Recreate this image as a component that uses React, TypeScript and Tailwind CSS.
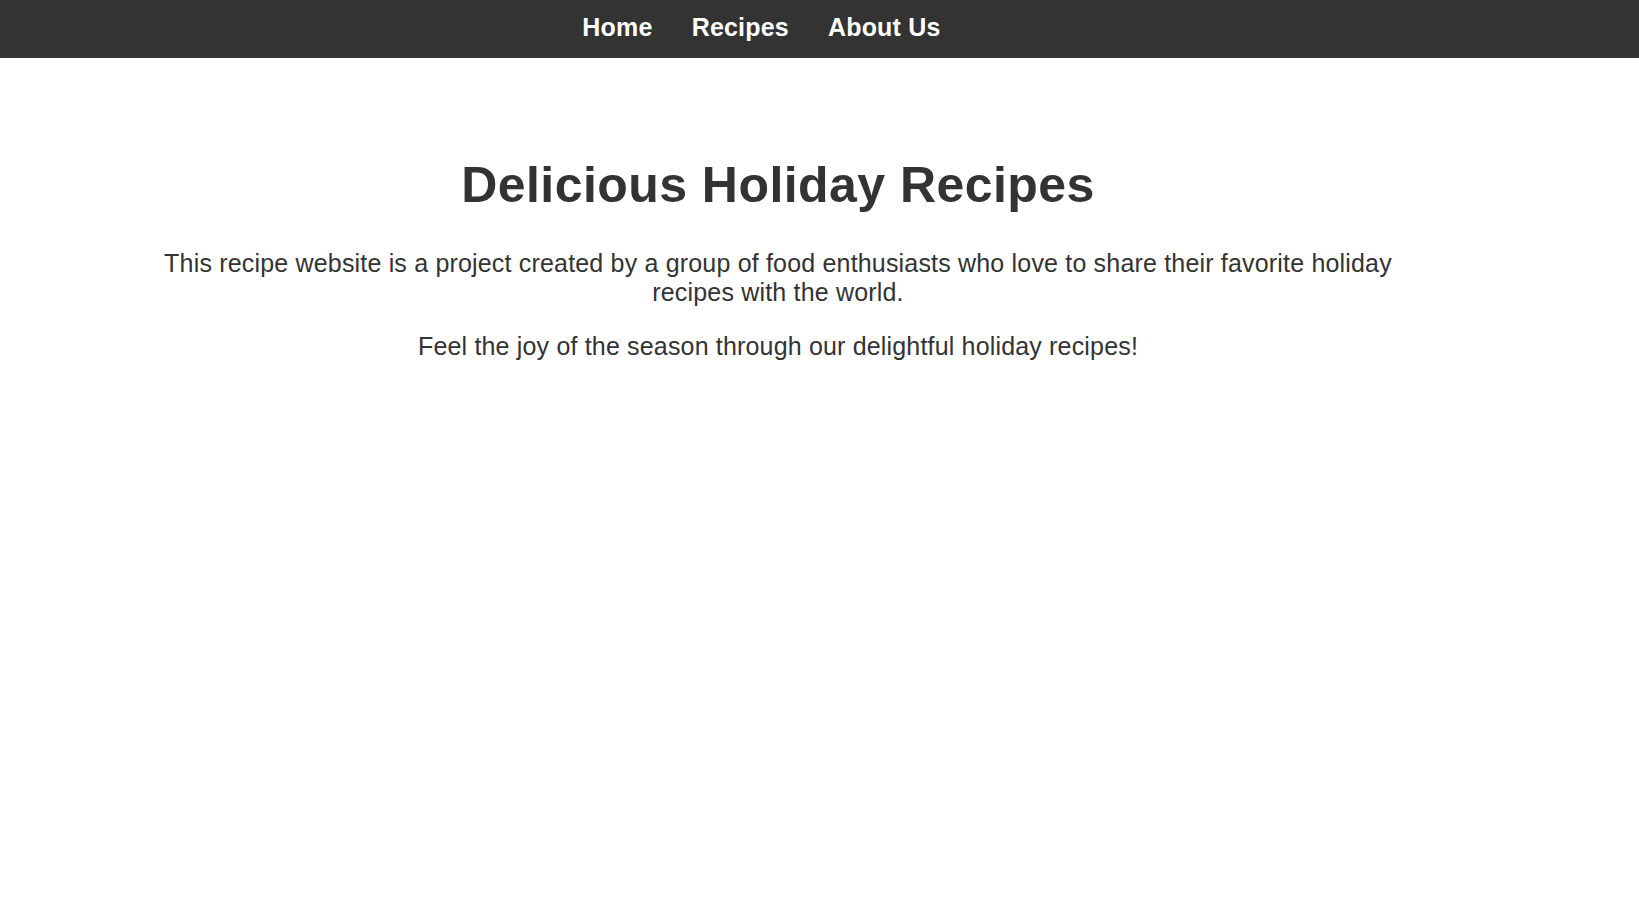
import React from "react";

export default function App() {
  return (
    <div className="min-h-[902px] bg-white text-[#333]" style={{ fontFamily: '"Liberation Sans", Arial, sans-serif' }}>
      <header className="h-[58px] w-full bg-[#333]">
        <nav className="w-[1556px] flex justify-center pt-[13px] pr-[33px]">
          <ul className="flex gap-[39px] text-[25px] font-bold text-white leading-[normal] tracking-[0.2px]">
            <li><a href="#">Home</a></li>
            <li><a href="#">Recipes</a></li>
            <li><a href="#">About Us</a></li>
          </ul>
        </nav>
      </header>
      <main className="w-[1556px] pt-[98px]">
        <div className="max-w-[1250px] mx-auto text-center">
          <h1 className="text-[50px] font-bold leading-[normal] mb-[35px] tracking-[0.45px]">Delicious Holiday Recipes</h1>
          <p className="text-[25px] leading-[normal] mb-[25px] tracking-[0.18px]">
            This recipe website is a project created by a group of food enthusiasts who love to share their favorite holiday recipes with the world.
          </p>
          <p className="text-[25px] leading-[normal] tracking-[0.17px]">Feel the joy of the season through our delightful holiday recipes!</p>
        </div>
      </main>
    </div>
  );
}
